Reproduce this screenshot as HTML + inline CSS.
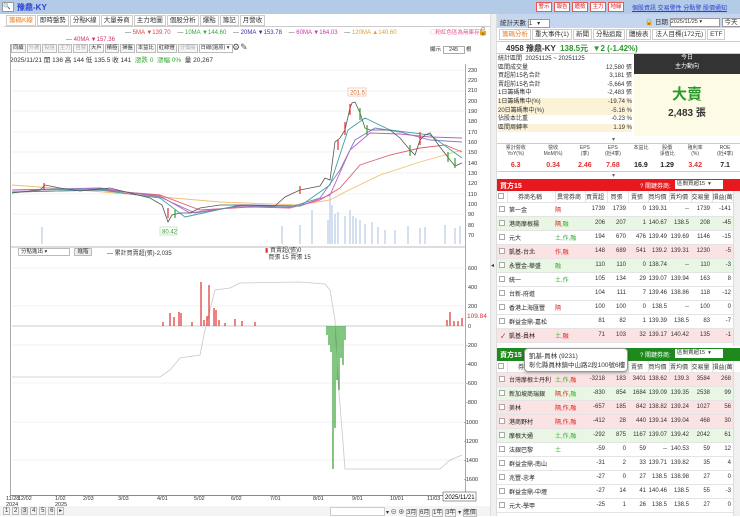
<!DOCTYPE html>
<html><head><meta charset="utf-8">
<style>
*{margin:0;padding:0;box-sizing:border-box}
body{width:740px;height:516px;overflow:hidden;background:#fff;font-family:"Liberation Sans","Noto Sans CJK TC",sans-serif;font-size:7px;color:#333;position:relative}
.a{position:absolute;white-space:nowrap}
.tab{display:inline-block;border:1px solid #ccc;padding:0 2px;height:11px;line-height:9px;font-size:6.5px;margin-right:1px;background:#fff}
.tb{display:inline-block;border:1px solid #bbb;padding:0 1px;height:9px;line-height:7px;font-size:5.3px;margin-right:1px;background:#f6f6f6}
.rb{display:inline-block;border:1px solid #e55;color:#d22;width:16px;text-align:center;height:10px;line-height:8px;font-size:5.5px;background:#fff;margin-right:2px}
table{border-collapse:collapse;table-layout:fixed;position:absolute}
td{font-size:6px;height:14px;border-bottom:1px solid #e4e4e4;text-align:right;padding-right:2px;overflow:hidden;white-space:nowrap}
td.n{text-align:left;padding-left:2px;color:#222}
td.t{text-align:left;color:#d22}
tr.g td{background:#eaf6e4}tr.p td{background:#fbe3e3}
.hd td{height:11px;text-align:center;background:#fff;border-right:1px solid #e4e4e4}
.cb{display:inline-block;width:6px;height:6px;border:1px solid #aaa;background:#fff;vertical-align:middle}
</style></head><body>
<!-- top bar -->
<div class="a" style="left:0;top:0;width:740px;height:14px;background:#b4cbe8"></div>
<div class="a" style="left:2px;top:2px;width:12px;height:10px;background:#fff;border:1px solid #999;font-size:6px;line-height:8px">&#128269;</div>
<div class="a" style="left:17px;top:2px;font-size:8px;font-weight:bold;color:#2a3fd0">豫鼎-KY</div>
<div class="a" style="left:536px;top:2px"><span class="rb">警示</span><span class="rb">報告</span><span class="rb">體檢</span><span class="rb">主力</span><span class="rb">地緣</span></div>
<div class="a" style="left:632px;top:3px;font-size:6px;color:#2a3fd0;text-decoration:underline">個股資訊 交易警性 分點警 股價通知</div>
<!-- tabs -->
<div class="a" style="left:6px;top:15px"><span class="tab" style="color:#e67e22">籌碼K線</span><span class="tab">即時盤勢</span><span class="tab">分點K線</span><span class="tab">大量券商</span><span class="tab">主力地圖</span><span class="tab">個股分析</span><span class="tab">爆點</span><span class="tab">籌記</span><span class="tab">月營收</span></div>
<div class="a" style="left:4px;top:26px;width:486px;height:1px;background:#ccc"></div>
<!-- MA legend -->
<div class="a" style="left:125px;top:30px;font-size:6px"><span style="color:#555">—</span> <span style="color:#d44">5MA ▼139.70</span> &nbsp;&nbsp;&nbsp;<span style="color:#555">—</span> <span style="color:#3a3">10MA ▼144.60</span> &nbsp;&nbsp;&nbsp;<span style="color:#555">—</span> <span style="color:#33a">20MA ▼153.78</span> &nbsp;&nbsp;&nbsp;<span style="color:#555">—</span> <span style="color:#c3a">60MA ▼164.03</span> &nbsp;&nbsp;&nbsp;<span style="color:#555">—</span> <span style="color:#e0a030">120MA ▲140.60</span></div>
<div class="a" style="left:66px;top:37px;font-size:6px"><span style="color:#555">—</span> <span style="color:#c36">40MA ▼157.36</span></div>
<div class="a" style="left:430px;top:28px;font-size:5.5px;color:#e05090">◯粉紅色區為無庫存區</div>
<div class="a" style="left:478px;top:27px;font-size:8px">🔓</div>
<!-- toolbar -->
<div class="a" style="left:11px;top:44px"><span class="tb">同續</span><span class="tb" style="color:#aaa">外資</span><span class="tb" style="color:#aaa">投信</span><span class="tb" style="color:#aaa">主力</span><span class="tb" style="color:#aaa">自營</span><span class="tb">大戶</span><span class="tb">積極</span><span class="tb">掃盤</span><span class="tb">本益比</span><span class="tb">紅綠燈</span><span class="tb" style="color:#aaa">分價股</span><span class="tb" style="width:34px;background:#fff">日線(還原) ▾</span></div>
<div class="a" style="left:232px;top:42px;font-size:9px;color:#555">⚙✎</div>
<div class="a" style="left:10px;top:54px;font-size:6.5px">2025/11/21 開 136 高 144 低 135.5 收 141 &nbsp;<span style="color:#3a3">漲跌 0 &nbsp;漲幅 0%</span> &nbsp;量 20,267</div>
<div class="a" style="left:430px;top:45px;font-size:5.5px">顯示 <span style="display:inline-block;border:1px solid #aaa;width:22px;text-align:center">245</span> 根</div>
<!-- chart frame -->
<div class="a" style="left:10px;top:44px;width:1px;height:452px;background:#aaa"></div>
<div class="a" style="left:465px;top:64px;width:1px;height:432px;background:#aaa"></div>
<div class="a" style="left:490px;top:14px;width:7px;height:502px;background:#f0f0f0;border-left:1px solid #ddd;border-right:1px solid #ddd"></div>
<div class="a" style="left:491px;top:262px;font-size:6px">◂</div>
<div class="a" style="left:10px;top:495px;width:456px;height:1px;background:#888"></div>
<svg class="a" style="left:0;top:0" width="490" height="516">
<g stroke="#f0f0f0" stroke-width="1">
<line x1="12" y1="70" x2="464" y2="70"/><line x1="12" y1="91" x2="464" y2="91"/><line x1="12" y1="111" x2="464" y2="111"/><line x1="12" y1="132" x2="464" y2="132"/><line x1="12" y1="152" x2="464" y2="152"/><line x1="12" y1="173" x2="464" y2="173"/><line x1="12" y1="194" x2="464" y2="194"/><line x1="12" y1="214" x2="464" y2="214"/>
<line x1="12" y1="268" x2="464" y2="268"/><line x1="12" y1="306" x2="464" y2="306"/><line x1="12" y1="345" x2="464" y2="345"/><line x1="12" y1="383" x2="464" y2="383"/><line x1="12" y1="422" x2="464" y2="422"/><line x1="12" y1="460" x2="464" y2="460"/>
</g>
<line x1="10" y1="247" x2="466" y2="247" stroke="#bbb"/>
<g stroke="#b8cce4" stroke-width="1.2">
<line x1="42" y1="244" x2="42" y2="227"/><line x1="300" y1="244" x2="300" y2="225"/><line x1="282" y1="244" x2="282" y2="226"/><line x1="312" y1="244" x2="312" y2="210"/><line x1="330" y1="244" x2="330" y2="195"/><line x1="332" y1="244" x2="332" y2="205"/><line x1="328" y1="244" x2="328" y2="220"/><line x1="335" y1="244" x2="335" y2="214"/><line x1="338" y1="244" x2="338" y2="212"/><line x1="345" y1="244" x2="345" y2="216"/><line x1="350" y1="244" x2="350" y2="210"/><line x1="353" y1="244" x2="353" y2="216"/><line x1="356" y1="244" x2="356" y2="218"/><line x1="360" y1="244" x2="360" y2="220"/><line x1="365" y1="244" x2="365" y2="224"/><line x1="372" y1="244" x2="372" y2="222"/><line x1="378" y1="244" x2="378" y2="227"/><line x1="385" y1="244" x2="385" y2="230"/><line x1="395" y1="244" x2="395" y2="230"/><line x1="408" y1="244" x2="408" y2="226"/><line x1="420" y1="244" x2="420" y2="228"/><line x1="425" y1="244" x2="425" y2="227"/><line x1="445" y1="244" x2="445" y2="225"/><line x1="455" y1="244" x2="455" y2="228"/><line x1="460" y1="244" x2="460" y2="226"/>
</g>
<g fill="none" stroke-width="0.9">
<polyline stroke="#f0c070" points="12,185 80,190 150,196 220,202 300,205 330,200 345,192 380,175 420,162 462,150"/>
<polyline stroke="#e06070" points="12,192 100,190 160,195 200,210 250,207 290,208 320,200 340,188 360,165 390,155 420,148 445,145 462,152"/>
<polyline stroke="#8080c0" points="12,190 100,188 160,197 195,213 240,206 290,207 320,198 340,170 355,140 375,128 400,132 430,140 462,142"/>
<polyline stroke="#c060c0" points="12,190 100,189 160,196 190,213 250,205 300,206 330,195 350,150 370,133 400,134 430,137 462,138"/>
<polyline stroke="#40a0a0" points="12,192 100,190 160,198 185,217 240,205 300,206 330,185 348,130 365,118 390,130 430,135 462,158"/>
</g>
<polyline fill="none" stroke="#555" stroke-width="0.8" points="12,193 40,190 45,185 60,188 80,191 110,188 130,193 150,198 162,205 168,222 172,215 180,213 190,213 200,208 220,205 245,205 275,206 285,197 300,190 320,186 325,178 330,180 335,142 340,138 345,130 350,108 352,103 355,102 360,113 365,128 370,130 380,130 390,130 400,138 410,150 415,155 420,140 425,135 430,133 440,147 450,160 455,166 462,163"/>
<g stroke="#e03030" stroke-width="1.2"><line x1="345" y1="122" x2="345" y2="135"/><line x1="350" y1="104" x2="350" y2="115"/><line x1="338" y1="140" x2="338" y2="150"/><line x1="420" y1="132" x2="420" y2="145"/><line x1="300" y1="186" x2="300" y2="194"/><line x1="44" y1="183" x2="44" y2="190"/><line x1="168" y1="208" x2="168" y2="218"/></g>
<g stroke="#30a030" stroke-width="1.2"><line x1="360" y1="108" x2="360" y2="120"/><line x1="367" y1="125" x2="367" y2="135"/><line x1="410" y1="145" x2="410" y2="156"/><line x1="455" y1="158" x2="455" y2="168"/><line x1="175" y1="210" x2="175" y2="218"/><line x1="448" y1="152" x2="448" y2="162"/></g>
<rect x="348" y="88" width="18" height="8" fill="#fff" stroke="#e8a080" stroke-width="0.5"/><text x="350" y="94.5" font-size="6" fill="#e06020">201.5</text>
<rect x="160" y="227" width="17" height="8" fill="#fff" stroke="#9c9" stroke-width="0.5"/><text x="162" y="233.5" font-size="6" fill="#393">80.42</text>
<g font-size="5.5" fill="#333"><text x="468" y="72">230</text><text x="468" y="82">220</text><text x="468" y="92">210</text><text x="468" y="103">200</text><text x="468" y="113">190</text><text x="468" y="123">180</text><text x="468" y="134">170</text><text x="468" y="144">160</text><text x="468" y="154">150</text><text x="468" y="165">140</text><text x="468" y="175">130</text><text x="468" y="185">120</text><text x="468" y="196">110</text><text x="468" y="206">100</text><text x="468" y="216">90</text><text x="468" y="227">80</text><text x="468" y="237">70</text>
<text x="468" y="270">600</text><text x="468" y="289">400</text><text x="468" y="308">200</text><text x="468" y="328">0</text><text x="466" y="347">-200</text><text x="466" y="366">-400</text><text x="466" y="385">-600</text><text x="466" y="404">-800</text><text x="464" y="424">-1000</text><text x="464" y="443">-1200</text><text x="464" y="462">-1400</text><text x="464" y="481">-1600</text></g>
<text x="467" y="318" font-size="6.5" fill="#d33">109.84</text>
<line x1="12" y1="326" x2="464" y2="326" stroke="#ccc"/>
<polyline fill="none" stroke="#c8c8c8" stroke-width="0.8" points="12,377 160,377 170,370 180,358 200,355 205,330 215,290 230,288 240,283 300,282 325,284 330,290 335,320 338,380 342,430 345,469 440,469 450,460 462,455"/>
<g stroke="#e03030" stroke-width="1.2">
<line x1="163" y1="326" x2="163" y2="322"/><line x1="170" y1="326" x2="170" y2="313"/><line x1="174" y1="326" x2="174" y2="317"/><line x1="179" y1="326" x2="179" y2="312"/><line x1="181" y1="326" x2="181" y2="313"/><line x1="192" y1="326" x2="192" y2="322"/><line x1="201" y1="326" x2="201" y2="282"/><line x1="204" y1="326" x2="204" y2="320"/><line x1="207" y1="326" x2="207" y2="316"/><line x1="209" y1="326" x2="209" y2="285"/><line x1="214" y1="326" x2="214" y2="308"/><line x1="216" y1="326" x2="216" y2="310"/><line x1="219" y1="326" x2="219" y2="320"/><line x1="225" y1="326" x2="225" y2="323"/><line x1="235" y1="326" x2="235" y2="319"/><line x1="242" y1="326" x2="242" y2="321"/><line x1="255" y1="326" x2="255" y2="322"/><line x1="447" y1="326" x2="447" y2="320"/><line x1="450" y1="326" x2="450" y2="312"/><line x1="454" y1="326" x2="454" y2="321"/><line x1="458" y1="326" x2="458" y2="321"/><line x1="462" y1="326" x2="462" y2="318"/>
</g>
<g stroke="#30a030" stroke-width="1.2">
<line x1="327" y1="326" x2="327" y2="335"/><line x1="329" y1="326" x2="329" y2="345"/><line x1="331" y1="326" x2="331" y2="352"/><line x1="333" y1="326" x2="333" y2="469"/><line x1="335" y1="326" x2="335" y2="428"/><line x1="337" y1="326" x2="337" y2="380"/><line x1="339" y1="326" x2="339" y2="390"/><line x1="341" y1="326" x2="341" y2="358"/><line x1="343" y1="326" x2="343" y2="365"/><line x1="345" y1="326" x2="345" y2="340"/>
</g>
<g font-size="5.5" fill="#333"><text x="6" y="500">11/28</text><text x="6" y="506">2024</text><text x="18" y="500">12/02</text><text x="55" y="500">1/02</text><text x="55" y="506">2025</text><text x="83" y="500">2/03</text><text x="118" y="500">3/03</text><text x="157" y="500">4/01</text><text x="194" y="500">5/02</text><text x="231" y="500">6/02</text><text x="270" y="500">7/01</text><text x="313" y="500">8/01</text><text x="352" y="500">9/01</text><text x="390" y="500">10/01</text><text x="427" y="500">11/03</text></g>
<rect x="443" y="492" width="33" height="9" fill="#fff" stroke="#555" stroke-width="0.6"/><text x="445" y="499" font-size="6">2025/11/21</text>
</svg>
<div class="a" style="left:18px;top:248px;width:52px;height:8px;border:1px solid #bbb;font-size:5.5px;line-height:6px;padding-left:2px;background:#fff">分點進出 ▾</div>
<div class="a" style="left:74px;top:248px;width:18px;height:8px;border:1px solid #bbb;font-size:5.5px;line-height:6px;text-align:center;background:#eee">進階</div>
<div class="a" style="left:107px;top:248px;font-size:6px">— 累計買賣超(張)-2,035</div>
<div class="a" style="left:265px;top:248px;font-size:6px;line-height:7px"><span style="color:#d33">▮</span> 買賣超(張)0<br>&nbsp;&nbsp;買張 15 賣張 15</div>
<div class="a" style="left:0;top:506px;width:490px;height:10px;background:#f4f4f4"></div>
<div class="a" style="left:3px;top:507px;font-size:6px"><span style="border:1px solid #bbb;padding:0 1px">1</span> <span style="border:1px solid #bbb;padding:0 1px">2</span> <span style="border:1px solid #bbb;padding:0 1px;background:#ddd">3</span> <span style="border:1px solid #bbb;padding:0 1px">4</span> <span style="border:1px solid #bbb;padding:0 1px">5</span> <span style="border:1px solid #bbb;padding:0 1px">6</span> <span style="border:1px solid #bbb;padding:0 1px">▸</span></div>
<div class="a" style="left:330px;top:507px;width:55px;height:9px;border:1px solid #ccc;background:#fff"></div>
<div class="a" style="left:386px;top:507px;font-size:6px">▾ ⊖ ⊕ <span style="border:1px solid #bbb">3月</span> <span style="border:1px solid #bbb">6月</span> <span style="border:1px solid #bbb">1年</span> <span style="border:1px solid #bbb">3年</span> ▾ <span style="border:1px solid #bbb">進價</span></div>

<!-- RIGHT PANEL -->
<div class="a" style="left:497px;top:14px;width:243px;height:14px;background:#c6d6ee"></div>
<div class="a" style="left:500px;top:17px;font-size:6.5px">統計天數 <span style="display:inline-block;width:22px;height:9px;border:1px solid #999;background:#fff;font-size:6px;vertical-align:middle">1 &nbsp;&nbsp;▾</span></div>
<div class="a" style="left:645px;top:16px;font-size:6.5px">🔒 日期 <span style="display:inline-block;width:50px;height:9px;border:1px solid #999;background:#fff;font-size:5.5px;vertical-align:middle">2025/11/25 ▾</span> <span style="border:1px solid #999;background:#fff;padding:0 2px">今天</span></div>
<div class="a" style="left:499px;top:29px"><span class="tab" style="color:#e67e22">籌碼分析</span><span class="tab">重大事件(1)</span><span class="tab">新聞</span><span class="tab">分點追蹤</span><span class="tab">體檢表</span><span class="tab">法人目標(172元)</span><span class="tab">ETF</span></div>
<div class="a" style="left:497px;top:41px;width:243px;height:13px;border-top:1px solid #ccc;border-bottom:1px solid #ccc"></div>
<div class="a" style="left:506px;top:43px;font-size:8px;font-weight:bold">4958 豫鼎-KY &nbsp;<span style="color:#2a9a2a">138.5元 &nbsp;▼2 (-1.42%)</span></div>
<div class="a" style="left:498px;top:55px;width:134px;font-size:6px;line-height:8.6px">
<div>統計區間 &nbsp;20251125 ~ 20251125</div>
<div>區間成交量<span style="float:right">12,580 張</span></div>
<div>買超前15名合計<span style="float:right">3,181 張</span></div>
<div>賣超前15名合計<span style="float:right">-5,664 張</span></div>
<div>1日籌碼集中<span style="float:right">-2,483 張</span></div>
<div style="background:#fbf2d8">1日籌碼集中(%)<span style="float:right">-19.74 %</span></div>
<div style="background:#fbf2d8">20日籌碼集中(%)<span style="float:right">-5.16 %</span></div>
<div>佔股本比重<span style="float:right">-0.23 %</span></div>
<div style="background:#fbf2d8">區間周轉率<span style="float:right">1.19 %</span></div>
</div>
<div class="a" style="left:634px;top:54px;width:106px;height:20px;background:#333;color:#fff;text-align:center;font-size:6px;line-height:9px">今日<br>主力動向</div>
<div class="a" style="left:634px;top:74px;width:106px;height:62px;background:#fdfbe6;text-align:center"><div style="color:#2a9a2a;font-size:15px;font-weight:bold;margin-top:9px">大賣</div><div style="font-size:10px;font-weight:bold">2,483 張</div></div>
<div class="a" style="left:612px;top:136px;font-size:6px;color:#666">▾</div>
<div class="a" style="left:497px;top:143px;width:243px;height:29px;border-top:1px solid #ccc;border-bottom:1px solid #ccc"></div>
<div class="a" style="left:497px;top:145px;width:243px;display:flex;font-size:5px;text-align:center;line-height:6px;color:#444">
<div style="flex:1">累計營收<br>YoY(%)</div><div style="flex:1">營收<br>MoM(%)</div><div style="flex:.7">EPS<br>(季)</div><div style="flex:.8">EPS<br>(近4季)</div><div style="flex:.7">本益比</div><div style="flex:.7">股價<br>淨值比</div><div style="flex:.8">殖利率<br>(%)</div><div style="flex:.8">ROE<br>(近4季)</div></div>
<div class="a" style="left:497px;top:162px;width:243px;display:flex;font-size:7px;font-weight:bold;text-align:center;color:#d33">
<div style="flex:1">6.3</div><div style="flex:1">0.34</div><div style="flex:.7">2.46</div><div style="flex:.8">7.68</div><div style="flex:.7;color:#222">16.9</div><div style="flex:.7;color:#222">1.29</div><div style="flex:.8">3.42</div><div style="flex:.8;color:#222">7.1</div></div>
<div class="a" style="left:612px;top:172px;font-size:6px;color:#666">▾</div>
<div class="a" style="left:497px;top:179px;width:243px;height:12px;background:#e8191e"></div>
<div class="a" style="left:500px;top:181px;font-size:7px;color:#fff;font-weight:bold">買方15</div>
<div class="a" style="left:640px;top:181px;font-size:6px;color:#fff">? 關鍵券商:</div>
<div class="a" style="left:675px;top:180px;width:48px;height:9px;background:#fff;font-size:5.5px;line-height:8px;padding-left:2px">區間買超15 &nbsp;▾</div>
<table style="left:497px;top:191px;width:236px">
<colgroup><col style="width:10px"><col style="width:48px"><col style="width:30px"><col style="width:22px"><col style="width:21px"><col style="width:20px"><col style="width:21px"><col style="width:22px"><col style="width:21px"><col style="width:21px"></colgroup>
<tr class="hd"><td><span class="cb"></span></td><td>券商名稱</td><td>異常券商</td><td>買賣超</td><td>買張</td><td>賣張</td><td>買均價</td><td>賣均價</td><td>交易量</td><td>損益(萬)</td></tr>
<tr><td><span class="cb"></span></td><td class="n">第一金</td><td class="t">隔</td><td>1739</td><td>1739</td><td>0</td><td>139.31</td><td>--</td><td>1739</td><td>-141</td></tr>
<tr class="g"><td><span class="cb"></span></td><td class="n">港商摩根揚</td><td class="t">隔<span style="color:#3a3">,融</span></td><td>206</td><td>207</td><td>1</td><td>140.67</td><td>138.5</td><td>208</td><td>-45</td></tr>
<tr><td><span class="cb"></span></td><td class="n">元大</td><td class="t" style="color:#3a3">土,作,融</td><td>194</td><td>670</td><td>476</td><td>139.49</td><td>139.69</td><td>1146</td><td>-15</td></tr>
<tr class="p"><td><span class="cb"></span></td><td class="n">凱基-台北</td><td class="t">作,融</td><td>148</td><td>689</td><td>541</td><td>139.2</td><td>139.31</td><td>1230</td><td>-5</td></tr>
<tr class="g"><td><span class="cb"></span></td><td class="n">永豐金-華盛</td><td class="t" style="color:#3a3">融</td><td>110</td><td>110</td><td>0</td><td>138.74</td><td>--</td><td>110</td><td>-3</td></tr>
<tr><td><span class="cb"></span></td><td class="n">統一</td><td class="t" style="color:#3a3">土,作</td><td>105</td><td>134</td><td>29</td><td>139.07</td><td>139.94</td><td>163</td><td>8</td></tr>
<tr><td><span class="cb"></span></td><td class="n">台新-府道</td><td class="t"></td><td>104</td><td>111</td><td>7</td><td>139.46</td><td>138.86</td><td>118</td><td>-12</td></tr>
<tr><td><span class="cb"></span></td><td class="n">香港上海匯豐</td><td class="t">隔</td><td>100</td><td>100</td><td>0</td><td>138.5</td><td>--</td><td>100</td><td>0</td></tr>
<tr><td><span class="cb"></span></td><td class="n">群益金鼎-嘉松</td><td class="t"></td><td>81</td><td>82</td><td>1</td><td>139.39</td><td>138.5</td><td>83</td><td>-7</td></tr>
<tr class="p"><td>✓</td><td class="n">凱基-員林</td><td class="t" style="color:#3a3">土,<span style="color:#d22">融</span></td><td>71</td><td>103</td><td>32</td><td>139.17</td><td>140.42</td><td>135</td><td>-1</td></tr>
</table>
<div class="a" style="left:733px;top:191px;width:7px;height:155px;background:#f0f0f0;border-left:1px solid #ddd"></div>
<div class="a" style="left:497px;top:348px;width:243px;height:13px;background:#1e8a1e"></div>
<div class="a" style="left:500px;top:350px;font-size:7px;color:#fff;font-weight:bold">賣方15</div>
<div class="a" style="left:640px;top:350px;font-size:6px;color:#fff">? 關鍵券商:</div>
<div class="a" style="left:675px;top:349px;width:48px;height:9px;background:#fff;font-size:5.5px;line-height:8px;padding-left:2px">區間賣超15 &nbsp;▾</div>
<table style="left:497px;top:361px;width:236px">
<colgroup><col style="width:10px"><col style="width:48px"><col style="width:30px"><col style="width:22px"><col style="width:21px"><col style="width:20px"><col style="width:21px"><col style="width:22px"><col style="width:21px"><col style="width:21px"></colgroup>
<tr class="hd"><td><span class="cb"></span></td><td>券商名稱</td><td>異常券商</td><td>買賣超</td><td>買張</td><td>賣張</td><td>買均價</td><td>賣均價</td><td>交易量</td><td>損益(萬)</td></tr>
<tr class="p"><td><span class="cb"></span></td><td class="n">台灣摩根士丹利</td><td class="t"><span style="color:#3a3">土,作,</span>融</td><td>-3218</td><td>183</td><td>3401</td><td>138.62</td><td>139.3</td><td>3584</td><td>268</td></tr>
<tr class="g"><td><span class="cb"></span></td><td class="n">新加坡商瑞銀</td><td class="t">隔,作,<span style="color:#3a3">融</span></td><td>-830</td><td>854</td><td>1684</td><td>139.09</td><td>139.35</td><td>2538</td><td>99</td></tr>
<tr class="p"><td><span class="cb"></span></td><td class="n">美林</td><td class="t">隔,作,融</td><td>-657</td><td>185</td><td>842</td><td>138.82</td><td>139.24</td><td>1027</td><td>56</td></tr>
<tr class="p"><td><span class="cb"></span></td><td class="n">港商野村</td><td class="t">隔,作,融</td><td>-412</td><td>28</td><td>440</td><td>139.14</td><td>139.04</td><td>468</td><td>30</td></tr>
<tr class="g"><td><span class="cb"></span></td><td class="n">摩根大通</td><td class="t" style="color:#3a3">土,作,融</td><td>-292</td><td>875</td><td>1167</td><td>139.07</td><td>139.42</td><td>2042</td><td>61</td></tr>
<tr><td><span class="cb"></span></td><td class="n">法銀巴黎</td><td class="t" style="color:#3a3">土</td><td>-59</td><td>0</td><td>59</td><td>--</td><td>140.53</td><td>59</td><td>12</td></tr>
<tr><td><span class="cb"></span></td><td class="n">群益金鼎-南山</td><td class="t"></td><td>-31</td><td>2</td><td>33</td><td>139.71</td><td>139.82</td><td>35</td><td>4</td></tr>
<tr><td><span class="cb"></span></td><td class="n">兆豐-忠孝</td><td class="t"></td><td>-27</td><td>0</td><td>27</td><td>138.5</td><td>138.98</td><td>27</td><td>0</td></tr>
<tr><td><span class="cb"></span></td><td class="n">群益金鼎-中壢</td><td class="t"></td><td>-27</td><td>14</td><td>41</td><td>140.46</td><td>138.5</td><td>55</td><td>-3</td></tr>
<tr><td><span class="cb"></span></td><td class="n">元大-學甲</td><td class="t"></td><td>-25</td><td>1</td><td>26</td><td>138.5</td><td>138.5</td><td>27</td><td>0</td></tr>
</table>
<div class="a" style="left:733px;top:372px;width:7px;height:144px;background:#f0f0f0;border-left:1px solid #ddd"></div>
<div class="a" style="left:524px;top:348px;width:104px;height:24px;background:#fff;border:1px solid #999;border-radius:4px;font-size:6.5px;line-height:9px;padding:3px 4px;box-shadow:0 1px 3px rgba(0,0,0,.3)">凱基-員林 (9231)<br>彰化縣員林鎮中山路2段100號6樓</div>
</body></html>
